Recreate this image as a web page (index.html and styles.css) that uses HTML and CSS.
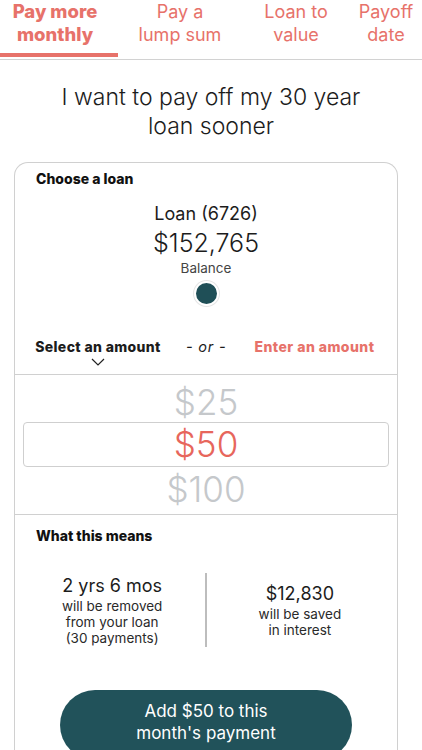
FILE: index.html
```html
<!DOCTYPE html>
<html>
<head>
<meta charset="utf-8">
<link rel="stylesheet" href="styles.css">
</head>
<body>
<nav class="tabs">
  <div class="tab tab-1 active">Pay more<br>monthly</div>
  <div class="tab tab-2">Pay a<br>lump sum</div>
  <div class="tab tab-3">Loan to<br>value</div>
  <div class="tab tab-4">Payoff<br>date</div>
</nav>
<h1 class="title">I want to pay off my 30 year<br>loan sooner</h1>
<section class="card">
  <div class="section-label">Choose a loan</div>
  <div class="loan">
    <div class="loan-name">Loan (6726)</div>
    <div class="loan-balance">$152,765</div>
    <div class="loan-caption">Balance</div>
    <div class="dot"></div>
  </div>
  <div class="mode-row">
    <div class="mode mode-select">
      <span>Select an amount</span>
      <svg class="chevron" width="14" height="8" viewBox="0 0 14 8"><path d="M1 1 L7 7 L13 1" fill="none" stroke="#222" stroke-width="1.2"/></svg>
    </div>
    <div class="mode mode-or">- or -</div>
    <div class="mode mode-enter">Enter an amount</div>
  </div>
  <div class="picker">
    <div class="pick pick-dim pick-top">$25</div>
    <div class="pick pick-selected">$50</div>
    <div class="pick pick-dim">$100</div>
  </div>
  <div class="means">
    <div class="section-label">What this means</div>
    <div class="stats">
      <div class="stat stat-left">
        <div class="stat-value">2 yrs 6 mos</div>
        <div class="stat-text">will be removed<br>from your loan<br>(30 payments)</div>
      </div>
      <div class="stat-divider"></div>
      <div class="stat stat-right">
        <div class="stat-value">$12,830</div>
        <div class="stat-text">will be saved<br>in interest</div>
      </div>
    </div>
    <div class="btn-wrap">
      <button class="cta">Add $50 to this<br>month's payment</button>
    </div>
  </div>
</section>
</body>
</html>
```

FILE: styles.css
```css
html, body {
  margin: 0;
  padding: 0;
  background: #ffffff;
  font-family: Inter, "Noto Sans", "Liberation Sans", sans-serif;
  color: #1c1c1c;
  overflow: hidden;
  height: 750px;
}

.tabs {
  display: flex;
  border-bottom: 1.5px solid #d2d2d2;
  padding-bottom: 2px;
}

.tab {
  text-align: center;
  font-size: 18px;
  line-height: 23px;
  color: #e7726a;
  height: 53px;
  box-sizing: border-box;
  padding-top: 0;
  white-space: nowrap;
}

.tab-1 { width: 118px; }
.tab-2 { width: 124px; }
.tab-3 { width: 108px; }
.tab-4 { width: 72px; }

.tab.active {
  font-weight: 800;
  font-size: 18.5px;
  height: 57px;
  border-bottom: 4px solid #e7726a;
  padding-right: 8px;
}

.title {
  margin: 23px 0 0;
  text-align: center;
  font-size: 23px;
  line-height: 29px;
  font-weight: 300;
  color: #1c1c1c;
}

.card {
  margin: 21px 24px 0 14px;
  border: 1.5px solid #d0d0d0;
  border-bottom: none;
  border-radius: 14px 14px 0 0;
  height: 700px;
}

.section-label {
  font-size: 14px;
  line-height: 16px;
  font-weight: 800;
  color: #111;
  padding: 8px 0 0 21px;
}

.loan {
  display: flex;
  flex-direction: column;
  align-items: center;
  margin-top: 16px;
}

.loan-name {
  font-size: 18px;
  line-height: 22px;
  color: #1c1c1c;
}

.loan-balance {
  font-size: 25px;
  line-height: 32px;
  margin-top: 2px;
  font-weight: 300;
  color: #1c1c1c;
}

.loan-caption {
  font-size: 13.5px;
  line-height: 18px;
  margin-top: 0;
  color: #444;
}

.dot {
  width: 21px;
  height: 21px;
  border-radius: 50%;
  background: #1f4f57;
  border: 2px solid #fff;
  box-shadow: 0 0 0 1px #e6e6e6;
  margin-top: 4px;
}

.mode-row {
  display: flex;
  align-items: flex-start;
  margin-top: 32px;
  padding-left: 19px;
  height: 36px;
  border-bottom: 1.5px solid #d0d0d0;
}

.mode {
  font-size: 14px;
  line-height: 18px;
  font-weight: 800;
}

.mode-select {
  display: flex;
  flex-direction: column;
  align-items: center;
  width: 128px;
  letter-spacing: 0.35px;
}

.chevron {
  margin-top: 2px;
}

.mode-or {
  font-weight: 400;
  font-style: italic;
  font-size: 14.5px;
  margin-left: 24px;
  letter-spacing: 0.8px;
}

.mode-enter {
  color: #e7726a;
  margin-left: 28px;
  letter-spacing: 0.45px;
}

.picker {
  display: flex;
  flex-direction: column;
  align-items: stretch;
  padding: 7px 8px 3px;
  border-bottom: 1.5px solid #d0d0d0;
}

.pick {
  text-align: center;
  font-size: 35px;
  line-height: 44px;
  font-weight: 300;
}

.pick-top {
  line-height: 40px;
}

.pick-dim {
  color: #c5c8cb;
}

.pick-selected {
  color: #e7665c;
  border: 1px solid #cfcfcf;
  border-radius: 4px;
  line-height: 43px;
}

.means .section-label {
  padding-top: 13px;
}

.stats {
  display: flex;
  align-items: center;
  margin-top: 29px;
}

.stat {
  flex: 1;
  text-align: center;
}

.stat-left {
  padding-left: 4px;
}

.stat-right {
  padding-right: 4px;
}

.stat-value {
  font-size: 18px;
  line-height: 24px;
  color: #1c1c1c;
}

.stat-text {
  font-size: 13.5px;
  line-height: 16px;
  color: #2a2a2a;
}

.stat-divider {
  width: 1.5px;
  height: 74px;
  background: #bdbdbd;
}

.btn-wrap {
  display: flex;
  justify-content: center;
  margin-top: 43px;
}

.cta {
  width: 292px;
  height: 70px;
  border: none;
  border-radius: 35px;
  background: #21525a;
  color: #fff;
  font-family: Inter, "Noto Sans", "Liberation Sans", sans-serif;
  font-size: 17px;
  line-height: 22px;
  padding: 10px 0 0;
  display: flex;
  flex-direction: column;
  align-items: center;
  justify-content: flex-start;
}
```
